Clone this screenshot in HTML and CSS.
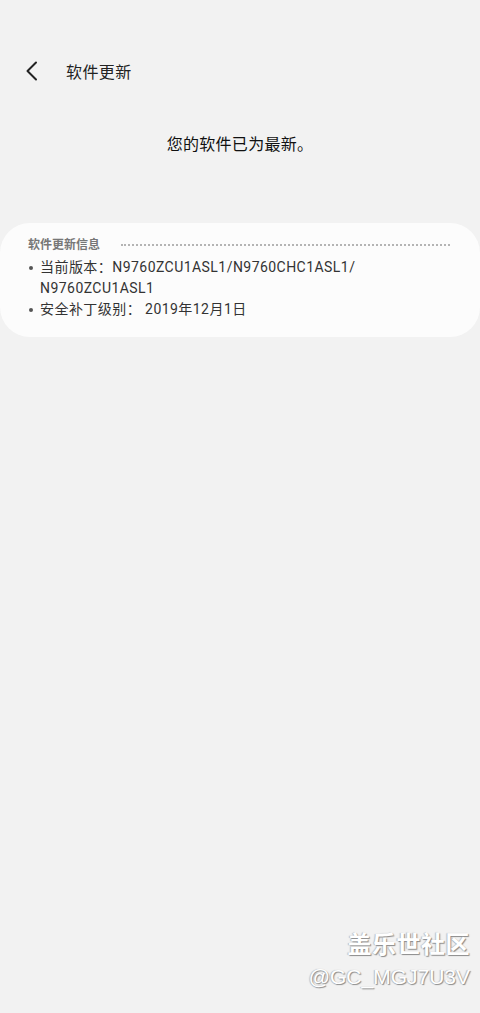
FILE: index.html
```html
<!DOCTYPE html>
<html lang="zh-CN">
<head>
    <meta charset="UTF-8">
    <meta name="viewport" content="width=device-width, initial-scale=1.0">
    <title>软件更新</title>
    <link rel="stylesheet" href="styles.css">
</head>
<body>

    <div class="screen">
        <div class="top-bar">
            <span class="back">
                <svg width="14" height="20" viewBox="0 0 14 20">
                    <path d="M11 1.5 L2.5 10 L11 18.5" fill="none" stroke="#222" stroke-width="2" stroke-linecap="round" stroke-linejoin="round"/>
                </svg>
            </span>
            <h1>软件更新</h1>
        </div>

        <p class="status">您的软件已为最新。</p>

        <div class="card">
            <div class="card-head">
                <span>软件更新信息</span>
                <span class="dots"></span>
            </div>
            <ul class="info">
                <li>当前版本：N9760ZCU1ASL1/N9760CHC1ASL1/<br>N9760ZCU1ASL1</li>
                <li>安全补丁级别： 2019年12月1日</li>
            </ul>
        </div>

        <div class="watermark">
            <div class="wm-title">盖乐世社区</div>
            <div class="wm-user">@GC_MGJ7U3V</div>
        </div>
    </div>

</body>
</html>
```

FILE: styles.css
```css
body {
    margin: 0;
    background-color: #f2f2f2;
    font-family: Roboto, "Noto Sans CJK SC", sans-serif;
    color: #222;
}

.screen {
    position: relative;
    height: 1013px;
    overflow: hidden;
}

.top-bar {
    display: flex;
    align-items: center;
    height: 30px;
    padding: 56px 0 0 25px;
}

.back {
    display: flex;
    width: 41px;
}

h1 {
    margin: 0;
    font-size: 16px;
    font-weight: normal;
    letter-spacing: 0.4px;
    color: #222;
}

.status {
    margin: 48px 0 0;
    text-align: center;
    font-size: 16px;
    line-height: 22px;
    letter-spacing: 0.3px;
    color: #111;
}

.card {
    margin-top: 67px;
    background-color: #fcfcfc;
    border-radius: 30px;
    padding: 13px 28px 17px;
}

.card-head {
    display: flex;
    align-items: center;
    font-size: 12px;
    font-weight: bold;
    color: #777;
    line-height: 18px;
}

.dots {
    flex: 1;
    margin-left: 21px;
    margin-right: 2px;
    border-top: 2px dotted #b4b4b4;
}

.info {
    list-style: none;
    margin: 3px 0 0;
    padding: 0;
    font-size: 14px;
    line-height: 21px;
    letter-spacing: 0.45px;
    color: #333;
}

.info li {
    position: relative;
    padding-left: 12px;
}

.info li::before {
    content: "";
    position: absolute;
    left: 1px;
    top: 9px;
    width: 4px;
    height: 4px;
    border-radius: 50%;
    background-color: #555;
}

.watermark {
    position: absolute;
    right: 10px;
    top: 928px;
    text-align: right;
    color: #fff;
    text-shadow: 1px 1px 1px #8a8a8a, -1px 0 1px #bbb;
}

.wm-title {
    font-size: 24px;
    font-weight: bold;
    line-height: 34px;
    letter-spacing: 0.5px;
}

.wm-user {
    font-size: 21px;
    line-height: 30px;
    font-family: "Liberation Sans", sans-serif;
}
```
